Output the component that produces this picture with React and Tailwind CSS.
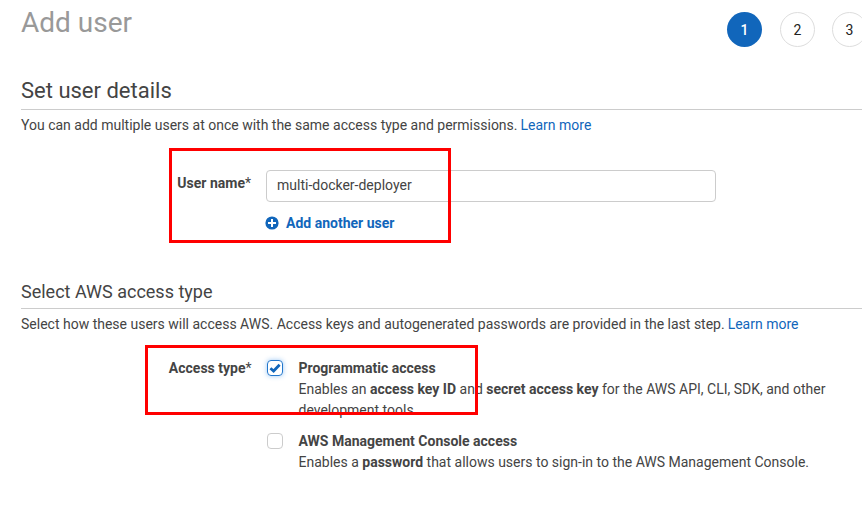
function Learn() {
  return <a className="-ml-[0.5px] text-[#1166bb]">Learn more</a>;
}

export default function App() {
  return (
    <div className="relative h-[524px] w-[862px] overflow-hidden bg-white pl-[21px] font-[Roboto,sans-serif] text-[14px] leading-[21px] text-[#444]">
      <header className="flex h-[74px] justify-between">
        <h1 className="pt-[5px] text-[28px] leading-[36px] text-[#999]">Add user</h1>
        <div className="-mr-[5px] flex pt-[12px] text-[#222]">
          <span className="mr-[18px] flex size-[35px] items-center justify-center rounded-full bg-[#1166bb] pt-[2px] font-medium text-white">1</span>
          <span className="mr-[17px] flex size-[35px] items-center justify-center rounded-full border border-[#ddd] pt-[2px]">2</span>
          <span className="flex size-[35px] items-center justify-center rounded-full border border-[#ddd] pt-[2px]">3</span>
        </div>
      </header>
      <section>
        <h2 className="h-[36px] border-b border-[#ccc] text-[22px] leading-[34px]">Set user details</h2>
        <p className="pt-[5px] whitespace-nowrap">
          You can add multiple users at once with the same access type and permissions. <Learn />
        </p>
        <div className="flex pt-[34px]">
          <label className="w-[230px] pt-[3px] text-right"><b>User name</b>*</label>
          <div className="ml-[15px]">
            <div className="h-[32px] w-[450px] rounded-[4px] border border-[#ccc] px-[10px] leading-[28px]">multi-docker-deployer</div>
            <div className="-ml-px flex items-center pt-[11px] font-bold text-[#1166bb]">
              <svg className="mr-[7px] mb-px size-[14px]" viewBox="0 0 14 14">
                <circle cx="7" cy="7" r="6.6" fill="#1166bb" />
                <path d="M7 3v8M3 7h8" stroke="white" strokeWidth="2" />
              </svg>
              Add another user
            </div>
          </div>
        </div>
      </section>
      <section className="pt-[46px]">
        <h3 className="h-[29px] border-b border-[#ccc] text-[18px] leading-[24px]">Select AWS access type</h3>
        <p className="pt-[5px] whitespace-nowrap">
          Select how these users will access AWS. Access keys and autogenerated passwords are provided in the last step. <Learn />
        </p>
        <div className="flex pt-[23px]">
          <div className="w-[230.5px] text-right"><b>Access type</b>*</div>
          <div className="ml-[15.5px]">
            <div className="flex">
              <span className="mt-[2px] mr-[15.5px] flex size-[16px] shrink-0 items-center justify-center rounded-[4px] border border-[#2277cc] shadow-[0_0_5px_rgba(34,130,230,0.45)]">
                <svg className="size-[12px] shrink-0" viewBox="0 0 12 12"><path d="M1.4 6.2L4.6 9L10.6 2.8" fill="none" stroke="#1166bb" strokeWidth="2.8" /></svg>
              </span>
              <div className="h-[73px] w-[545px]">
                <b>Programmatic access</b>
                <p>Enables an <b>access key ID</b> and <b>secret access key</b> for the AWS API, CLI, SDK, and other development tools.</p>
              </div>
            </div>
            <div className="flex">
              <span className="mt-[2px] mr-[15.5px] size-[16px] shrink-0 rounded-[4px] border border-[#ccc]" />
              <div>
                <b>AWS Management Console access</b>
                <p>Enables a <b>password</b> that allows users to sign-in to the AWS Management Console.</p>
              </div>
            </div>
          </div>
        </div>
      </section>
      <div className="absolute top-[148px] left-[169px] h-[95px] w-[282px] border-3 border-[#f00]" />
      <div className="absolute top-[345px] left-[145px] h-[70px] w-[333px] border-3 border-[#f00]" />
    </div>
  );
}
